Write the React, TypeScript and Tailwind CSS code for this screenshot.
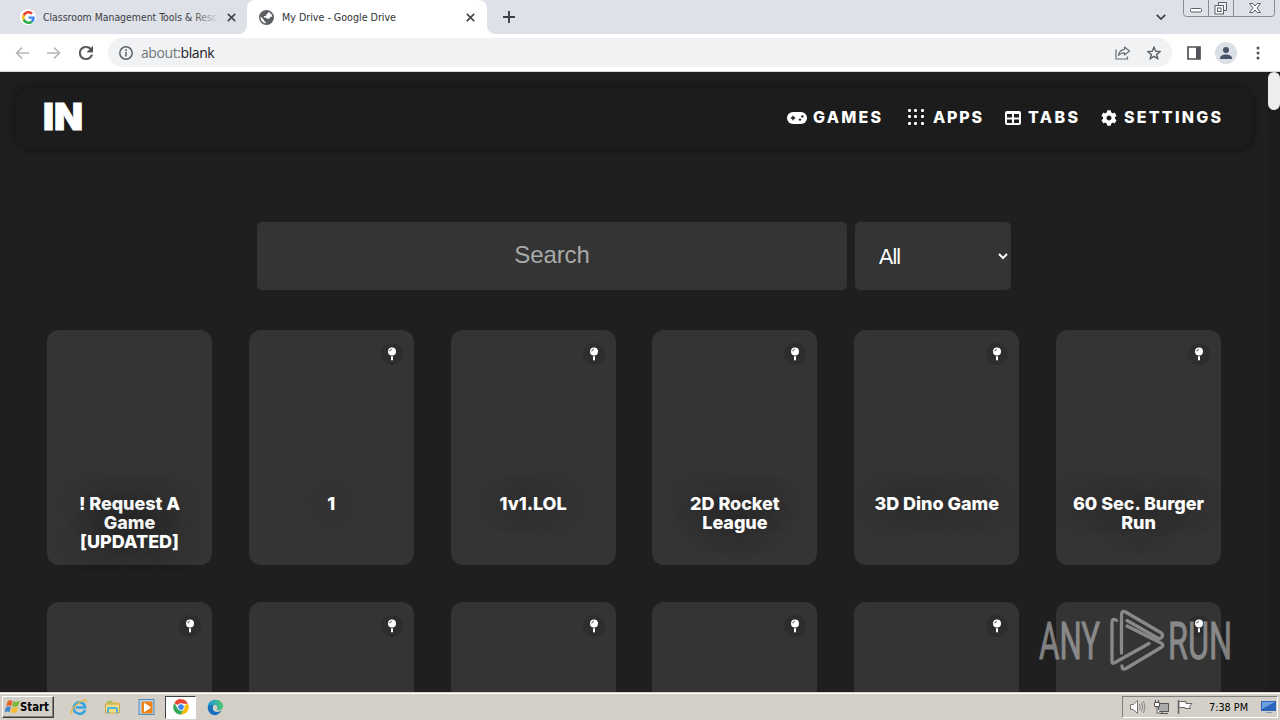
import type { ReactNode } from "react";
import { FaCog } from "react-icons/fa";

const Svg = ({ w, h, children, className = "" }: { w: number; h: number; children: ReactNode; className?: string }) => (
  <svg width={w} height={h} viewBox={`0 0 ${w} ${h}`} fill="none" className={`block shrink-0 ${className}`}>
    {children}
  </svg>
);

const GoogleLogo = () => (
  <svg width="13" height="13" viewBox="0 0 48 48" className="block">
    <path fill="#EA4335" d="M24 9.5c3.54 0 6.71 1.22 9.21 3.6l6.85-6.85C35.9 2.38 30.47 0 24 0 14.62 0 6.51 5.38 2.56 13.22l7.98 6.19C12.43 13.72 17.74 9.5 24 9.5z" />
    <path fill="#4285F4" d="M46.98 24.55c0-1.57-.15-3.09-.38-4.55H24v9.02h12.94c-.58 2.96-2.26 5.48-4.78 7.18l7.73 6c4.51-4.18 7.09-10.36 7.09-17.65z" />
    <path fill="#FBBC05" d="M10.53 28.59c-.48-1.45-.76-2.99-.76-4.59s.27-3.14.76-4.59l-7.98-6.19C.92 16.46 0 20.12 0 24c0 3.88.92 7.54 2.56 10.78l7.97-6.19z" />
    <path fill="#34A853" d="M24 48c6.48 0 11.93-2.13 15.89-5.81l-7.73-6c-2.15 1.45-4.92 2.3-8.16 2.3-6.26 0-11.57-4.22-13.47-9.91l-7.98 6.19C6.51 42.62 14.62 48 24 48z" />
  </svg>
);

const Close = () => (
  <Svg w={9} h={9}>
    <path d="M.8.8l7.400 7.400M8.200.8L.8 8.200" stroke="#45484d" strokeWidth="1.700" />
  </Svg>
);

const Globe = () => (
  <svg width="15" height="15" viewBox="2 2 20 20" className="block shrink-0">
    <circle cx="12" cy="12" r="10" fill="#5b5e62" />
    <path fill="#fff" d="M4.200 10.800l4.300 4.200c0 1.600.9 2.500 2.500 2.500v2.400c-4.500-.6-7.600-4.600-6.800-9.100zM14.500 4.500c3 1 5 3.700 5.300 6.500h-2.300l-2 2.500h-3L11 12H8.500v-2H11l1-1.500V7h1.500z" />
  </svg>
);

const TabStrip = () => (
  <div className="flex h-[34px] bg-[#dee1e8] [font-family:'DejaVu_Sans_Condensed','DejaVu_Sans',sans-serif]">
    <div className="flex w-[247px] items-center pl-5">
      <span className="flex size-[16px] items-center justify-center rounded-full bg-white"><GoogleLogo /></span>
      <svg width="176" height="16" className="ml-[7px] block overflow-visible">
        <defs>
          <linearGradient id="fade" gradientUnits="userSpaceOnUse" x1="148" x2="177" y1="0" y2="0">
            <stop stopColor="#3c4043" /><stop offset="1" stopColor="#dee1e8" />
          </linearGradient>
        </defs>
        <text x="0" y="12" fontSize="11" fill="url(#fade)" textLength="174" lengthAdjust="spacingAndGlyphs">Classroom Management Tools &amp; Resc</text>
      </svg>
      <span className="ml-[8px]"><Close /></span>
    </div>
    <div className="relative flex w-[240px] items-center rounded-t-[8px] bg-white pl-3">
      <Globe />
      <svg width="116" height="16" className="ml-[8px] block overflow-visible">
        <text x="0" y="12" fontSize="11" fill="#303236" textLength="114" lengthAdjust="spacingAndGlyphs">My Drive - Google Drive</text>
      </svg>
      <span className="ml-[68px]"><Close /></span>
      <svg width="8" height="8" className="absolute bottom-0 -left-2"><path d="M8 0v8H0a8 8 0 0 0 8-8z" fill="#fff" /></svg>
      <svg width="8" height="8" className="absolute -right-2 bottom-0"><path d="M0 0v8h8a8 8 0 0 1-8-8z" fill="#fff" /></svg>
    </div>
    <div className="flex flex-1 items-center pl-4">
      <Svg w={12} h={12}><path d="M6 0v12M0 6h12" stroke="#3c4043" strokeWidth="1.900" /></Svg>
    </div>
    <div className="flex">
      <Svg w={10} h={6} className="mt-[14px] mr-[17px]"><path d="M.8.8L5 5 9.200.8" stroke="#3c4043" strokeWidth="1.700" /></Svg>
      <Svg w={93} h={18} className="mr-[4px]">
        <path d="M.5 0v13.500q0 3 3 3h85q3 0 3-3V0M25.500 0v16M50.500 0v16" stroke="#878c96" />
        <rect x="7.500" y="8.500" width="11" height="3.500" rx="1" fill="#fff" stroke="#5b6069" />
        <path d="M35.500 5V2.500h8v8H41" stroke="#5b6069" fill="#eef0f3" />
        <rect x="32" y="5.500" width="8.500" height="8.500" fill="#fff" stroke="#5b6069" />
        <rect x="34.500" y="8" width="3.500" height="3.500" stroke="#5b6069" />
        <path d="M66.500 3.500h3.500l2 2.500 2-2.500h3.500L74 8l3.500 4.500H74L72 10l-2 2.500h-3.500L70 8z" fill="#fff" stroke="#5b6069" />
      </Svg>
    </div>
  </div>
);

const Toolbar = () => (
  <div className="flex h-[38px] items-center border-b border-[#d5d7da] bg-white pl-[15px]">
    <Svg w={14} h={12}><path d="M14 6H1.500M7 .6L1.500 6 7 11.400" stroke="#b4b6b9" strokeWidth="1.600" /></Svg>
    <Svg w={14} h={12} className="ml-[18px]"><path d="M0 6h12.500M7 .6L12.500 6 7 11.400" stroke="#b4b6b9" strokeWidth="1.600" /></Svg>
    <svg width="14" height="14" viewBox="4 4 16 16" className="ml-[18px] block">
      <path fill="#505357" stroke="#505357" strokeWidth=".4" d="M17.650 6.350C16.200 4.900 14.210 4 12 4c-4.420 0-7.990 3.580-7.990 8s3.570 8 7.990 8c3.730 0 6.840-2.550 7.730-6h-2.080c-.82 2.330-3.040 4-5.650 4-3.310 0-6-2.690-6-6s2.690-6 6-6c1.660 0 3.140.69 4.220 1.780L13 11h7V4l-2.350 2.350z" />
    </svg>
    <div className="ml-[15px] flex h-[29px] w-[1064px] items-center rounded-full bg-[#f0f2f4] pl-[11px]">
      <Svg w={14} h={14}><circle cx="7" cy="7" r="6.200" stroke="#5f6368" strokeWidth="1.500" /><path d="M7 6v4.500M7 3.300v1.600" stroke="#5f6368" strokeWidth="1.600" /></Svg>
      <div className="ml-[8px] flex text-[14px] leading-5 font-normal tracking-[-0.42px] text-[#202124] [font-family:'Open_Sans',sans-serif]">
        <span className="text-[#74787d]">about:</span>
        <span>blank</span>
      </div>
      <div className="flex-1" />
      <Svg w={16} h={14} className="mr-[16px]">
        <path d="M1 3.500v9.500h11.500v-2.500" stroke="#6b6f74" strokeWidth="1.200" />
        <path d="M9.500 1l5 4-5 4V6.800C6.500 6.600 4.800 7.800 3.500 9.500 4 6 6 3.600 9.500 3.300z" stroke="#6b6f74" strokeWidth="1.200" strokeLinejoin="round" />
      </Svg>
      <Svg w={14} h={14} className="mr-[11px]"><path d="M7 1.200l1.700 4 4.300.4-3.300 2.800 1 4.200L7 10.400l-3.700 2.200 1-4.200L1 5.600l4.300-.4z" stroke="#5a5e63" strokeWidth="1.400" /></Svg>
    </div>
    <Svg w={14} h={14} className="ml-[15px]"><path d="M1 1h12v12H1z" stroke="#505357" strokeWidth="1.700" /><path d="M9 1h4v12H9z" fill="#505357" /></Svg>
    <Svg w={22} h={22} className="ml-[14px]"><circle cx="11" cy="11" r="11" fill="#dbe0e6" /><circle cx="11" cy="8" r="3" fill="#4a5468" /><path d="M5 16.500c0-5.300 12-5.300 12 0v.5H5z" fill="#4a5468" /></Svg>
    <Svg w={4} h={14} className="ml-[19px]"><circle cx="2" cy="2" r="1.500" fill="#505357" /><circle cx="2" cy="7" r="1.500" fill="#505357" /><circle cx="2" cy="12" r="1.500" fill="#505357" /></Svg>
  </div>
);

const NavItem = ({ icon, label, width, className = "" }: { icon: ReactNode; label: string; width: number; className?: string }) => (
  <a className={`flex items-center ${className}`}>
    {icon}
    <svg width={width} height="20" className="block overflow-visible">
      <text x="0" y="15" fontSize="16" fontWeight="800" fill="#fff" letterSpacing="2" textLength={width + 1}>{label}</text>
    </svg>
  </a>
);

const GamepadIcon = () => (
  <Svg w={20} h={14} className="-mt-px mr-[6px]">
    <rect x="0" y="1" width="20" height="12" rx="6" fill="#fff" />
    <path d="M6 4.800v4.400M3.800 7h4.400" stroke="#1c1c1c" strokeWidth="1.400" />
    <circle cx="15.400" cy="5.400" r="1.200" fill="#1c1c1c" />
    <circle cx="13" cy="8.600" r="1.200" fill="#1c1c1c" />
  </Svg>
);

const AppsIcon = () => (
  <Svg w={18} h={18} className="-mt-[3px] mr-[8px]">
    {[1, 7, 14].map((y) => [1, 7, 14].map((x) => <rect key={`${x}-${y}`} x={x} y={y} width="3" height="3" rx="1" fill="#fff" />))}
  </Svg>
);

const TabsIcon = () => (
  <Svg w={16} h={14} className="mr-[7px]">
    <path fillRule="evenodd" fill="#fff" d="M2 0h12q2 0 2 2v10q0 2-2 2H2q-2 0-2-2V2Q0 0 2 0zM2 3v3.500h5V3zM9 3v3.500h5V3zM2 8.500V12h5V8.500zM9 8.500V12h5V8.500z" />
  </Svg>
);

const PinIcon = () => (
  <Svg w={10} h={14}>
    <circle cx="5" cy="4.500" r="4" fill="#fff" />
    <path d="M2.800 4.300q.2-1.700 1.900-1.900" stroke="#2b2b2b" strokeWidth=".9" />
    <path d="M4 9.200h2v3L5 14l-1-1.800z" fill="#fff" />
  </Svg>
);

const Nav = () => (
  <nav className="mx-[15px] mt-[15px] mb-[73px] flex h-[62px] w-[1238px] items-center rounded-[16px] bg-[#1c1c1c] pr-[31px] pl-[29px] shadow-[0_0_10px_rgba(0,0,0,0.5)]">
    <svg width="40" height="34" className="block overflow-visible">
      <text x="-1" y="28.500" fontSize="36.500" fontWeight="900" fill="#fff" stroke="#fff" strokeWidth=".9" textLength="40" lengthAdjust="spacingAndGlyphs">IN</text>
    </svg>
    <div className="flex-1" />
    <NavItem icon={<GamepadIcon />} label="GAMES" width={69} />
    <NavItem icon={<AppsIcon />} label="APPS" width={50} className="ml-[25px]" />
    <NavItem icon={<TabsIcon />} label="TABS" width={51} className="ml-[22px]" />
    <NavItem icon={<FaCog className="-mt-px mr-[7px] size-4 text-white" />} label="SETTINGS" width={98} className="ml-[22px]" />
  </nav>
);

const Card = ({ title, pinned = true }: { title?: string[]; pinned?: boolean }) => (
  <div className="relative h-[235px] rounded-[12px] bg-[#343434]">
    {pinned && (
      <span className="absolute top-[13px] right-[11px] flex size-[22px] items-center justify-center rounded-full bg-[#2d2d2d]">
        <PinIcon />
      </span>
    )}
    {title && (
      <div className="pt-[164px] text-center text-[18px] leading-[19px] font-extrabold tracking-[-0.04px] whitespace-nowrap text-white [text-shadow:0_0_30px_rgba(0,0,0,0.45)]">
        {title.map((line) => <div key={line}>{line}</div>)}
      </div>
    )}
  </div>
);

const titles = [["! Request A", "Game", "[UPDATED]"], ["1"], ["1v1.LOL"], ["2D Rocket", "League"], ["3D Dino Game"], ["60 Sec. Burger", "Run"]];

const Watermark = () => (
  <svg width="196" height="66" className="absolute top-[536px] left-[1037px] block overflow-visible opacity-55 [font-family:Roboto,sans-serif]">
    <g fill="#d0d0d0" stroke="#d0d0d0" strokeWidth=".9" fontSize="52" fontWeight="400">
      <text x="2" y="51" textLength="61" lengthAdjust="spacingAndGlyphs">ANY</text>
      <text x="131" y="51" textLength="64" lengthAdjust="spacingAndGlyphs">RUN</text>
    </g>
    <g fill="none" stroke="#d0d0d0" strokeWidth="3.300" strokeLinejoin="round" strokeLinecap="round">
      <path d="M79.500 12.500q-4.500-3-4.500 2v39q0 3 3 1l34-19" />
      <path d="M84.500 45V7q0-5 4-3l35 20.500q4 2.500.5 5.500-1.500 1-3.500 0L90 12.500" />
      <path d="M90 18l34 17q4 2 0 4.500L89 60.500q-4 2-4-2.500" />
    </g>
  </svg>
);

const TaskIcons = () => (
  <div className="flex items-center">
    <Svg w={18} h={18} className="ml-[16px]">
      <path d="M15 12c-1 3-4 4.500-7 3.500-4-1-5-4-4-7s4-5 7-4c3 1 4 3 4 5H6" stroke="#38a4df" strokeWidth="2.600" />
      <path d="M2 16c-3-2 3-9 8-12 4-2.500 7-3 6 0" stroke="#e7b83c" strokeWidth="1.300" />
    </Svg>
    <Svg w={18} h={18} className="ml-[16px]">
      <path d="M2 4l5-2 2 2h6v4H2z" fill="#e3c664" /><path d="M1.500 6h14v9h-14z" fill="#f3dc88" stroke="#c9aa50" />
      <path d="M4 15v-4q0-1 1-1h7q1 0 1 1v4" stroke="#4eb5d9" strokeWidth="2" /><path d="M3 4h5" stroke="#5fb665" />
    </Svg>
    <Svg w={18} h={18} className="ml-[16px]">
      <rect x="1" y="1.500" width="15" height="15" fill="#b4d2ea" stroke="#4f8dc0" /><rect x="3.500" y="3.500" width="11" height="12" rx="1" fill="#f08317" /><path d="M6.500 5.500l6 4-6 4z" fill="#fff" stroke="#fff" strokeLinejoin="round" />
    </Svg>
    <div className="ml-[9px] flex h-[23px] w-[31px] items-center justify-center border border-t-[#404040] border-r-white border-b-white border-l-[#404040] bg-white">
      <svg width="16" height="16" viewBox="0 0 48 48">
        <path fill="#ea4335" d="M24 24L4 12A23 23 0 0 1 45 14H24z" /><path fill="#fbbc05" d="M24 24l21-10A23 23 0 0 1 23 47l10-18z" /><path fill="#34a853" d="M4 12l11 18 18-1-10 18A23 23 0 0 1 4 12z" />
        <circle cx="24" cy="24" r="11" fill="#fff" /><circle cx="24" cy="24" r="8.500" fill="#4285f4" />
      </svg>
    </div>
    <svg width="17" height="17" viewBox="0 0 24 24" className="ml-[11px]">
      <defs><linearGradient id="edge" x1="0" x2="1" y1="0" y2="0"><stop stopColor="#1997d8" /><stop offset="1" stopColor="#54ca72" /></linearGradient></defs>
      <path fill="#1671bd" d="M1 11c2-4 6-6 10-4-3 2-4 7-1 10 3 2 7 2 11-1-3 5-7 7-10 7C5 23 1 18 1 11z" />
      <path fill="url(#edge)" d="M1 11C1 4 7 1 12 1c7 0 11 5 11 9 0 4-3 6-6 6-2 0-4-1-3-2 2-3-1-6-5-6-4 0-7 1-8 3z" />
    </svg>
  </div>
);

const Taskbar = () => (
  <div className="flex h-[28px] items-center border-t border-[#d4d0c8] bg-[#d4d0c8] pt-[1px] text-black shadow-[inset_0_1px_0_#fff] [font-family:'DejaVu_Sans_Condensed','DejaVu_Sans',sans-serif]">
    <div className="ml-[2px] flex h-[22px] w-[52px] items-center border border-t-white border-r-[#404040] border-b-[#404040] border-l-white pl-[1px] shadow-[inset_-1px_-1px_0_#808080]">
      <Svg w={17} h={16}>
        <path d="M3.500 2.500q2-2 5-.5L7.300 7q-2.800-1.300-5 .4z" fill="#ea6329" />
        <path d="M9.400 2.400q3 1.200 6.300-.7l-1.300 5.100q-3 1.600-6.300.5z" fill="#7cb83b" />
        <path d="M1.900 8.300q2.500-1.600 5-.4l-1.300 5q-2.500-1.200-5 .5z" fill="#4388c9" />
        <path d="M7.900 8.300q3 1.200 6.200-.6l-1.300 5.200q-3 1.600-6.200.4z" fill="#f4bd32" />
      </Svg>
      <svg width="30" height="16" className="block overflow-visible"><text x="-1" y="12" fontSize="11.500" fontWeight="700" textLength="29" lengthAdjust="spacingAndGlyphs">Start</text></svg>
    </div>
    <TaskIcons />
    <div className="flex-1" />
    <div className="mr-[2px] flex h-[22px] w-[156px] items-center border border-t-[#808080] border-r-white border-b-white border-l-[#808080] pl-[6px]">
      <Svg w={17} h={16}>
        <path d="M1.500 5.500h3l4-4v13l-4-4h-3z" fill="#fff" stroke="#777" /><path d="M10.500 5q1.500 3 0 6M12.500 3.500q2.500 4.500 0 9M14.500 2q3 6 0 12" stroke="#888" />
      </Svg>
      <Svg w={17} h={16} className="ml-[7px]">
        <path d="M5.500 4.500h10v8h-10zM9 13v2M7 14.500h8" fill="#aaa" stroke="#555" /><path d="M1.500 3.500h5v4h-5zM2.500 1v3M5.500 1v3M4 8v6h3" fill="#fff" stroke="#555" />
      </Svg>
      <Svg w={17} h={16} className="ml-[7px]">
        <path d="M1.500 1v14" stroke="#666" strokeWidth="1.500" /><path d="M2 2.500h7v2h6l-2.500 3 1 2H8v-1H2z" fill="#fff" stroke="#666" />
      </Svg>
      <svg width="41" height="16" className="ml-[15px] block overflow-visible"><text x="0" y="12" fontSize="11" textLength="39" lengthAdjust="spacingAndGlyphs">7:38 PM</text></svg>
      <Svg w={16} h={14} className="ml-[11px]">
        <path d="M0 1h15v10H0z" fill="#2965bb" /><path d="M1 2h13L1 9z" fill="#6da0df" /><path d="M5 12h6v1H5z" fill="#8397b2" />
      </Svg>
    </div>
  </div>
);

export default function App() {
  return (
    <div className="flex h-[720px] w-[1280px] flex-col overflow-hidden [font-family:Inter,sans-serif]">
      <TabStrip />
      <Toolbar />
      <main className="relative flex h-[620px] overflow-hidden bg-[#1f1f1f]">
        <div className="w-[1268px]">
          <Nav />
          <div className="mb-[40px] flex h-[68px] gap-2 pl-[257px] [font-family:'Liberation_Sans',Arial,sans-serif]">
            <div className="flex w-[590px] items-center justify-center rounded-[5px] bg-[#343434] pb-0.5 text-[24px] tracking-[-0.1px] text-[#a9a9a9]">Search</div>
            <div className="flex w-[156px] items-center justify-between rounded-[5px] bg-[#343434] pr-[3px] pl-[24px] text-[21.300px] text-white">
              <span className="pt-[3px] tracking-[-0.8px]">All</span>
              <Svg w={10} h={7}><path d="M1 1l4 4 4-4" stroke="#fff" strokeWidth="2" /></Svg>
            </div>
          </div>
          <div className="grid w-[1221px] grid-cols-[repeat(6,165px)] justify-between gap-y-[37px] pl-[47px]">
            {titles.map((t, i) => <Card key={t[0]} title={t} pinned={i > 0} />)}
            {titles.map((t) => <Card key={`next-${t[0]}`} />)}
          </div>
        </div>
        <div className="w-3 bg-[#1c1c1c]"><div className="h-[38px] rounded-full bg-[#ededed]" /></div>
        <Watermark />
      </main>
      <Taskbar />
    </div>
  );
}
